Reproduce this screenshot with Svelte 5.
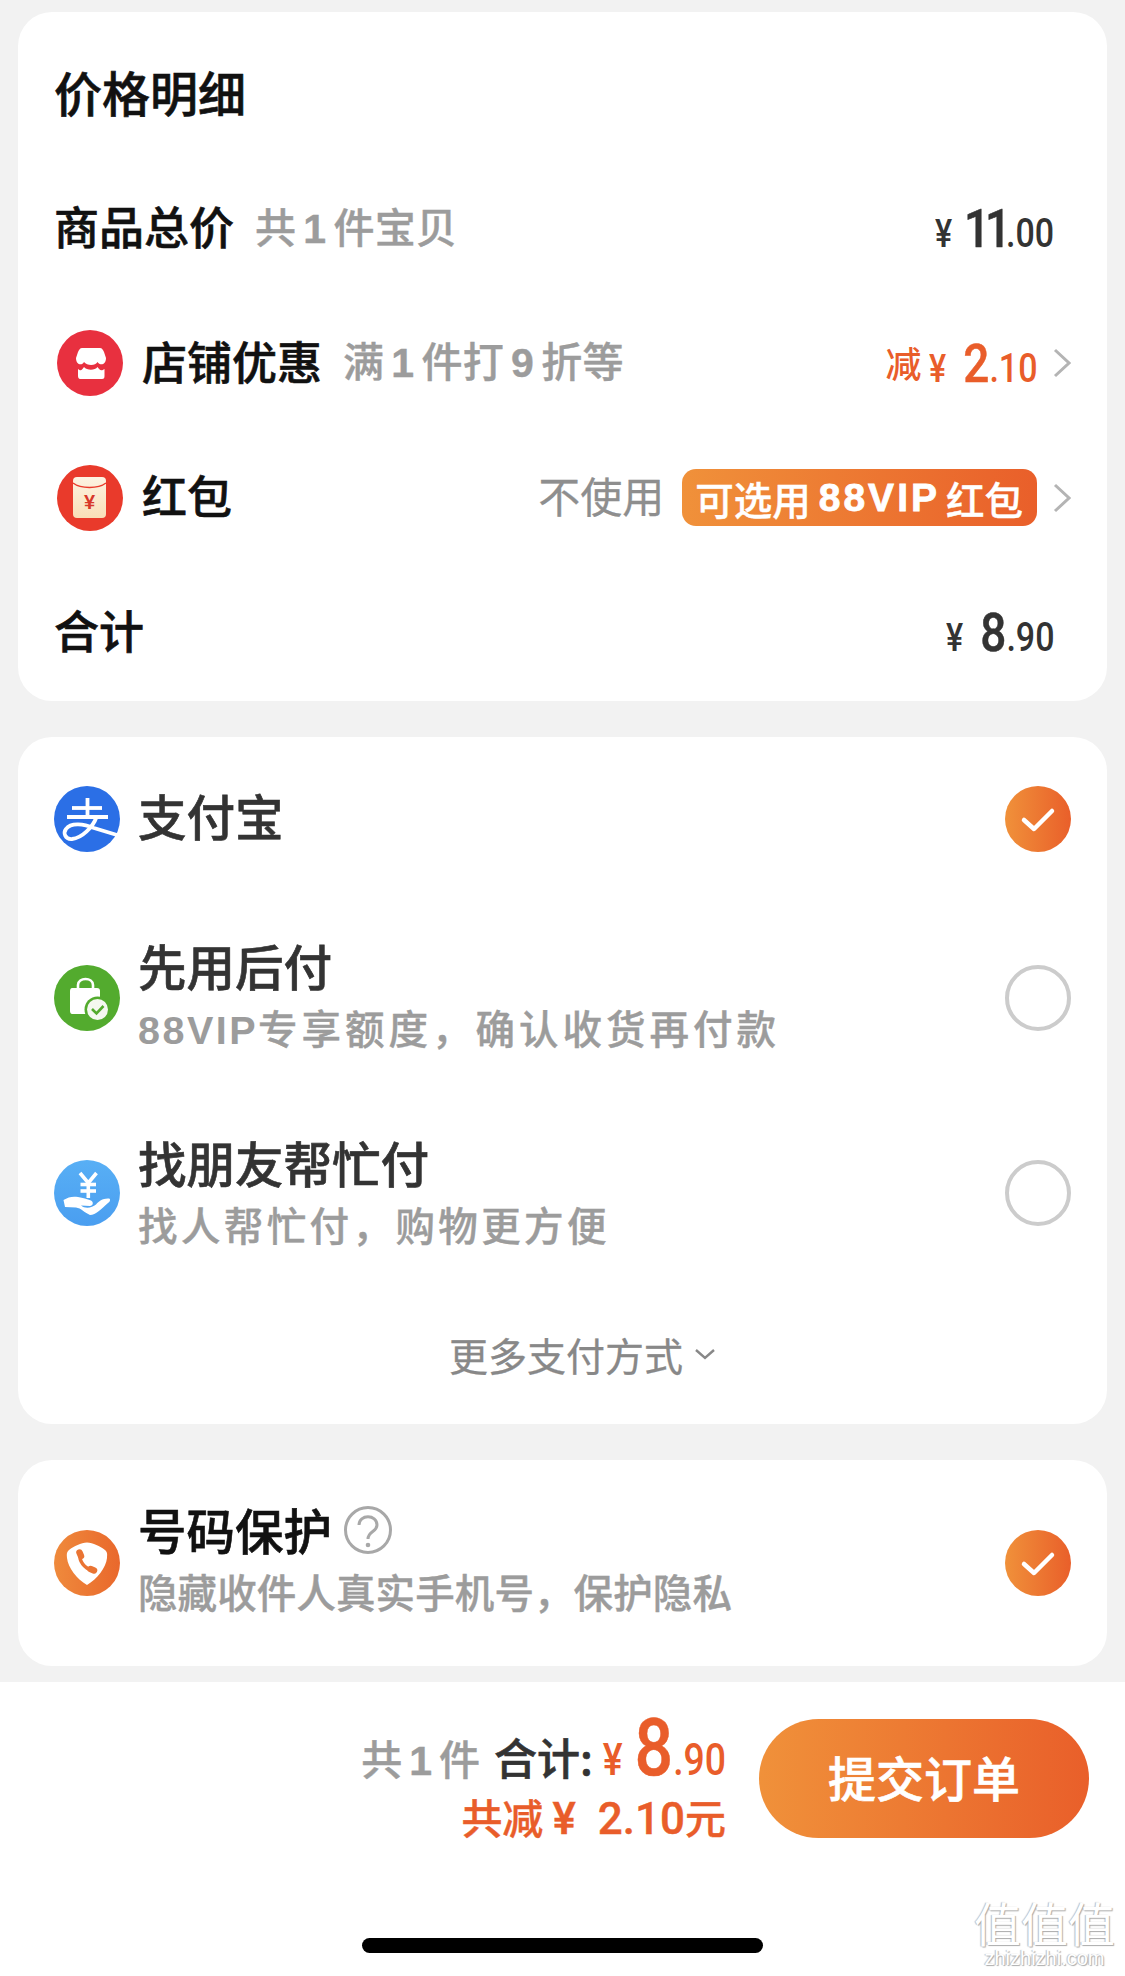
<script>
  const grad = "linear-gradient(90deg, #f0913a, #e95f2a)";
</script>

{#snippet chevron()}
  <svg class="chev" viewBox="0 0 18 30" width="18" height="30"><path d="M2 2 L16 15 L2 28" fill="none" stroke="#b4b4b4" stroke-width="3"/></svg>
{/snippet}

{#snippet radio(on)}
  {#if on}
    <span class="radio on" style="background:{grad}">
      <svg viewBox="0 0 66 66" width="66" height="66"><path d="M19 34 L29 43 L47 25" fill="none" stroke="#fff" stroke-width="4.5" stroke-linecap="round" stroke-linejoin="round"/></svg>
    </span>
  {:else}
    <span class="radio"></span>
  {/if}
{/snippet}

{#snippet price(int, dec, tight)}
  <span class="price"><span class="yen" class:near={tight}>¥</span><span class="int" class:tight>{int}</span><span class="dec">.{dec}</span></span>
{/snippet}

<div class="page">
  <section class="card detail">
    <div class="row"><h2>价格明细</h2></div>
    <div class="row">
      <span class="label">商品总价</span><span class="note">共<b>1</b>件宝贝</span>
      <span class="value">{@render price("11", "00", true)}</span>
    </div>
    <div class="row has-chev">
      <svg class="icon" viewBox="0 0 66 66" width="66" height="66">
        <circle cx="33" cy="33" r="33" fill="#e8303f"/>
        <g transform="translate(-1 3)" fill="#fff">
          <path d="M26 15 H44 C46 15 47 17 48 19 L50 25 C50 32 44 33 41.500 29 C39.500 33 31 33 28 29 C26 33 20 32 20 25 L22 19 C23 17 24 15 26 15 Z"/>
          <path d="M22 36 C25 38.500 26 37 28 34 C31 37.500 39 37.500 41.500 34 C43.500 37 45 38.500 48.500 36 V43 C48.500 45 48 46 46 46 H24 C23 46 22 45 22 43 Z"/>
        </g>
      </svg>
      <span class="label">店铺优惠</span><span class="note">满<b>1</b>件打<b>9</b>折等</span>
      <span class="value red"><span class="minus">减</span>{@render price("2", "10", false)}</span>
      {@render chevron()}
    </div>
    <div class="row has-chev">
      <svg class="icon" viewBox="0 0 66 66" width="66" height="66">
        <defs><linearGradient id="env" x1="0" y1="0" x2="0" y2="1"><stop offset="0" stop-color="#fdf3e2"/><stop offset="1" stop-color="#f9dfb8"/></linearGradient></defs>
        <circle cx="33" cy="33" r="33" fill="#e93a2b"/>
        <rect x="16" y="12" width="33" height="41" rx="4" fill="url(#env)"/>
        <path d="M16 18 C24 24 41 24 49 18" fill="none" stroke="#e93a2b" stroke-width="1.500"/>
        <text x="32.500" y="44" text-anchor="middle" class="env-yen">¥</text>
      </svg>
      <span class="label">红包</span>
      <span class="value"><span class="unused">不使用</span><span class="pill" style="background:{grad}">可选用<b>88VIP</b>红包</span></span>
      {@render chevron()}
    </div>
    <div class="row">
      <span class="label">合计</span>
      <span class="value">{@render price("8", "90", false)}</span>
    </div>
  </section>

  <section class="card pay">
    <div class="pay-row first">
      <svg class="icon" viewBox="0 0 66 66" width="66" height="66">
        <circle cx="33" cy="33" r="33" fill="#2b6fe6"/>
        <g fill="none" stroke="#fff" stroke-width="3.800">
          <path d="M33.500 12 V31"/>
          <path d="M18 22 H48"/>
          <path d="M13 31 H54"/>
          <path d="M42.500 31 C39 41 28 52 18 53 C11 53.500 9 47 12 43 C17 36 30 38 40 42 L63 49"/>
        </g>
      </svg>
      <div class="pay-text"><div class="pay-title">支付宝</div></div>
      {@render radio(true)}
    </div>
    <div class="pay-row">
      <svg class="icon" viewBox="0 0 66 66" width="66" height="66">
        <circle cx="33" cy="33" r="33" fill="#53ab2e"/>
        <path d="M24 24 V20 C24 12 39 12 39 20 V24" fill="none" stroke="#fff" stroke-width="2.600"/>
        <path d="M18 23 H43 C45 23 46 24 46 26 V46 C46 48 45 49 43 49 H18 C17 49 16 48 16 46 V26 C16 24 17 23 18 23 Z" fill="#fff"/>
        <circle cx="43.500" cy="44.500" r="13" fill="#53ab2e"/>
        <circle cx="43.500" cy="44.500" r="10.500" fill="#f4f8f0"/>
        <path d="M38 44 L42.500 48.500 L49.500 41" fill="none" stroke="#53ab2e" stroke-width="2.600"/>
      </svg>
      <div class="pay-text">
        <div class="pay-title">先用后付</div>
        <div class="sub vip"><b>88VIP</b>专享额度，确认收货再付款</div>
      </div>
      {@render radio(false)}
    </div>
    <div class="pay-row">
      <svg class="icon" viewBox="0 0 66 66" width="66" height="66">
        <defs><linearGradient id="sky" x1="0" y1="0" x2="0" y2="1"><stop offset="0" stop-color="#58aff5"/><stop offset="1" stop-color="#4a9ef0"/></linearGradient></defs>
        <circle cx="33" cy="33" r="33" fill="url(#sky)"/>
        <g fill="none" stroke="#fff" stroke-width="3.600">
          <path d="M26 13 L34.300 23 L42.500 13"/><path d="M34.300 23 V38"/><path d="M26.500 24.500 H42"/><path d="M26.500 31 H42"/>
        </g>
        <path d="M9.500 40 C14 37 19 36 24 37 C29 38 33 39 37 40.500 C40 42 39 46 36 46 L27 45.500 C31 49 38 48 42 44.500 C45 41 49 38 55 38.500 C57 39 56 42 54 43 C47 49 42 55 36 55 C31 53 27 48 22 47.500 L11 47 Z" fill="#fff"/>
      </svg>
      <div class="pay-text">
        <div class="pay-title">找朋友帮忙付</div>
        <div class="sub wide">找人帮忙付，购物更方便</div>
      </div>
      {@render radio(false)}
    </div>
    <div class="more">
      更多支付方式
      <svg viewBox="0 0 22 12" width="22" height="12"><path d="M2 2 L11 10 L20 2" fill="none" stroke="#888" stroke-width="2.400"/></svg>
    </div>
  </section>

  <section class="card protect">
    <svg class="icon" viewBox="0 0 66 66" width="66" height="66">
      <defs><linearGradient id="shield" x1="0" y1="0" x2="1" y2="0"><stop offset="0" stop-color="#ef8a3c"/><stop offset="1" stop-color="#e9682c"/></linearGradient></defs>
      <circle cx="33" cy="33" r="33" fill="url(#shield)"/>
      <path d="M33 12.500 C39 13 46 16 51 20 C54 23 53 25 53 28 C52 38 43 49 33 55 C23 49 14 38 13 28 C13 25 12 23 15 20 C20 16 27 13 33 12.500 Z" fill="#fff"/>
      <g fill="none" stroke="#ea7433" stroke-linecap="round">
        <path d="M26 24 C25 31 30 38 38.500 40.500" stroke-width="3.500"/>
        <path d="M25.500 22.500 L27 26" stroke-width="6.500"/>
        <path d="M36.500 39 L40 40.500" stroke-width="6.500"/>
      </g>
    </svg>
    <div class="pay-text">
      <div class="pay-title dark">号码保护
        <svg class="help" viewBox="0 0 48 48" width="48" height="48">
          <circle cx="24" cy="24" r="22.500" fill="none" stroke="#a8a8a8" stroke-width="3"/>
          <path d="M15 19 C15 8 33 8 33 19 C33 26 24 25 24 33" fill="none" stroke="#a8a8a8" stroke-width="3"/>
          <circle cx="24" cy="39" r="2.300" fill="#a8a8a8"/>
        </svg>
      </div>
      <div class="sub">隐藏收件人真实手机号，保护隐私</div>
    </div>
    {@render radio(true)}
  </section>

  <footer class="bar">
    <div class="bar-main">
      <div class="totals">
        <div class="line first">
          <span class="count">共<b>1</b>件</span>
          <span class="sum">合计:</span>
          <span class="price red big"><span class="yen">¥</span><span class="int">8</span><span class="dec">.90</span></span>
        </div>
        <div class="line saved">共减<span class="saved-num"><span class="yen">¥</span>2.10</span>元</div>
      </div>
      <button class="submit" style="background:{grad}">提交订单</button>
    </div>
    <div class="home"></div>
    <div class="mark">
      <div class="mark-cn">值值值</div>
      <div class="mark-en">zhizhizhi.com</div>
    </div>
  </footer>
</div>

<style>
:global(body) {
  margin: 0;
  background: #f2f2f2;
}

.page {
  width: 1125px;
  height: 1976px;
  overflow: hidden;
  display: flex;
  flex-direction: column;
  font-family: "Noto Sans CJK SC", "Liberation Sans", sans-serif;
  color: #111;
}

.card {
  background: #fff;
  border-radius: 34px;
  margin: 36px 18px 0;
}

.detail {
  margin-top: 12px;
  padding: 15px 0 1px;
}

.row {
  height: 134.5px;
  display: flex;
  align-items: center;
  padding: 0 53px 0 36px;
}

.row.has-chev {
  padding-right: 36px;
}

.has-chev .icon {
  margin-left: 3px;
  margin-right: 19px;
}

h2 {
  margin: 0;
  font-size: 48px;
  font-weight: 500;
  padding-bottom: 6px;
  -webkit-text-stroke: 0.6px #111;
}

.label {
  font-size: 45px;
  font-weight: 500;
  padding-bottom: 6px;
  -webkit-text-stroke: 0.6px #111;
}

.note {
  margin-left: 21px;
  font-size: 41px;
  letter-spacing: 0.3px;
  color: #9c9c9c;
  font-weight: 500;
  padding-bottom: 8px;
  -webkit-text-stroke: 0.4px #9c9c9c;
}

.note b,
.count b {
  font-family: "Liberation Sans", sans-serif;
  font-weight: 700;
  margin: 0 7px;
}

.icon {
  flex: none;
  margin-right: 18px;
}

.value {
  margin-left: auto;
  display: flex;
  align-items: center;
}

.chev {
  flex: none;
  margin-left: 16px;
}

/* no condensed face installed, so the digits get squeezed */
.price {
  font-family: Roboto, "Liberation Sans", sans-serif;
  color: #333;
  font-weight: 500;
  display: inline-flex;
  align-items: baseline;
  transform: scaleX(0.85);
  transform-origin: right center;
}

.yen {
  font-size: 38px;
  margin-right: 20px;
}

.yen.near {
  margin-right: 14px;
}

.int {
  font-size: 54px;
  -webkit-text-stroke: 0.5px currentColor;
}

.int.tight {
  letter-spacing: -6px;
}

.dec {
  font-size: 40px;
}

.red .price,
.price.red {
  color: #e95d2a;
}

.minus {
  font-size: 36px;
  color: #e95d2a;
  margin-right: -12px;
  font-weight: 500;
  padding-bottom: 2px;
}

.unused {
  font-size: 42px;
  color: #8e8e8e;
  margin-right: 18px;
  padding-bottom: 6px;
  -webkit-text-stroke: 0.3px #8e8e8e;
}

.pill {
  height: 57px;
  padding: 0 14px 0 13px;
  border-radius: 14px;
  display: flex;
  align-items: center;
  color: #fff;
  font-size: 38.5px;
  font-weight: 500;
  white-space: pre;
  -webkit-text-stroke: 0.4px #fff;
}

.pill b {
  font-family: "Liberation Sans", sans-serif;
  font-size: 39px;
  letter-spacing: 3px;
  margin: 0 6px 0 8px;
  -webkit-text-stroke: 0.8px #fff;
}

.env-yen {
  fill: #d8372a;
  font-family: "Liberation Sans", sans-serif;
  font-weight: 700;
  font-size: 20px;
}

.pay-row {
  height: 195px;
  display: flex;
  align-items: center;
  padding: 0 36px;
}

.pay-row.first {
  height: 164px;
}

.pay-row.first .pay-text {
  padding-bottom: 7px;
}

.pay-text {
  flex: 1;
}

.pay-title {
  font-size: 48.5px;
  line-height: 61px;
  font-weight: 500;
  color: #333;
  display: flex;
  align-items: center;
  gap: 12px;
  -webkit-text-stroke: 0.6px #333;
}

.pay-title.dark {
  color: #111;
  -webkit-text-stroke: 0.6px #111;
}

.sub {
  font-size: 39.5px;
  line-height: 61px;
  letter-spacing: 0.1px;
  color: #9c9c9c;
  font-weight: 500;
  white-space: nowrap;
  -webkit-text-stroke: 0.4px #9c9c9c;
}

.sub.wide {
  letter-spacing: 3.4px;
}

.sub.vip {
  letter-spacing: 4px;
}

.sub b {
  font-family: "Liberation Sans", sans-serif;
  letter-spacing: 2.5px;
  -webkit-text-stroke: 0;
}

.radio {
  flex: none;
  width: 66px;
  height: 66px;
  box-sizing: border-box;
  border-radius: 50%;
  border: 4px solid #ccc;
}

.radio.on {
  border: 0;
}

.radio svg {
  display: block;
}

.more {
  height: 133px;
  display: flex;
  align-items: center;
  justify-content: center;
  gap: 11px;
  font-size: 39px;
  color: #888;
  padding-bottom: 6px;
  padding-left: 40px;
  box-sizing: border-box;
  -webkit-text-stroke: 0.3px #888;
}

.protect {
  height: 206px;
  display: flex;
  align-items: center;
  padding: 0 36px;
}

.protect .pay-text {
  padding-bottom: 5px;
}

.bar {
  flex: 1;
  margin-top: 16px;
  background: #fff;
  position: relative;
}

.bar-main {
  display: flex;
  justify-content: flex-end;
  align-items: flex-start;
  gap: 33px;
  padding: 19px 36px 0 0;
}

.totals {
  display: flex;
  flex-direction: column;
  align-items: flex-end;
}

.line {
  height: 68px;
  display: flex;
  align-items: baseline;
  white-space: pre;
}

.line.first {
  height: 85px;
}

.count {
  font-size: 41px;
  color: #9c9c9c;
  font-weight: 500;
  margin-right: 14px;
  -webkit-text-stroke: 0.4px #9c9c9c;
}

.sum {
  font-size: 43px;
  color: #333;
  font-weight: 500;
  margin-right: -12px;
  -webkit-text-stroke: 0.6px #333;
}

.big .int {
  font-size: 80px;
}

.big .yen {
  font-size: 44px;
  margin-right: 14px;
}

.big .dec {
  font-size: 44px;
  margin-left: 0;
}

.saved {
  color: #e95d2a;
  font-size: 41px;
  font-weight: 500;
  -webkit-text-stroke: 0.4px #e95d2a;
}

.saved-num {
  font-family: Roboto, "Liberation Sans", sans-serif;
  font-size: 44px;
  margin: 0 0 0 9px;
}

.saved-num .yen {
  font-size: 44px;
  margin-right: 22px;
}

.submit {
  margin-top: 18px;
  width: 330px;
  height: 119px;
  padding: 0 0 4px;
  border: 0;
  border-radius: 60px;
  color: #fff;
  font: 500 48px "Noto Sans CJK SC", sans-serif;
  -webkit-text-stroke: 0.6px #fff;
}

.home {
  width: 401px;
  height: 15px;
  margin: 84px auto 0;
  border-radius: 8px;
  background: #000;
}

.mark {
  position: absolute;
  right: 10px;
  bottom: 8px;
  color: #fff;
  text-align: center;
  text-shadow: 1px 1px 1px #aaa, -1px 0 1px #bbb;
}

.mark-cn {
  font-size: 47px;
  line-height: 52px;
}

.mark-en {
  font: 20px/20px "Liberation Sans", sans-serif;
}
</style>
